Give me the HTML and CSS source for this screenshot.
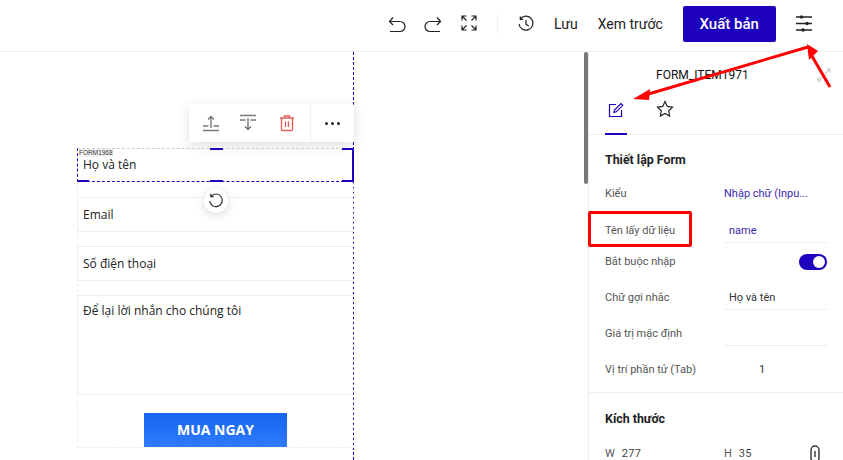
FILE: index.html
```html
<!DOCTYPE html>
<html lang="en">
<head>
  <meta charset="UTF-8">
  <title>Form editor</title>
  <link rel="stylesheet" href="styles.css">
</head>
<body>
  <header class="topbar">
    <button class="tool tool-undo" aria-label="Undo">
      <svg width="20" height="20" viewBox="0 0 20 20"><path d="M6 2.500 2.500 6.500 6 10M2.500 6.500H13a5 5 0 0 1 0 10H3"/></svg>
    </button>
    <button class="tool tool-redo" aria-label="Redo">
      <svg width="20" height="20" viewBox="0 0 20 20"><path d="M14 2.500l3.500 4L14 10M17.500 6.500H7a5 5 0 0 0 0 10h10"/></svg>
    </button>
    <button class="tool tool-full" aria-label="Fullscreen">
      <svg width="18" height="18" viewBox="0 0 18 18"><path d="M2 6.500V2h4.500M2 2l4.500 4.500M11.500 2H16v4.500M16 2l-4.500 4.500M2 11.500V16h4.500M2 16l4.500-4.500M16 11.500V16h-4.500M16 16l-4.500-4.500"/></svg>
    </button>
    <span class="divider"></span>
    <button class="tool tool-history" aria-label="History">
      <svg width="18" height="18" viewBox="0 0 18 18"><path d="M3.600 3.600A7 7 0 1 1 2 9M3.300 1.500v2.800h2.800M9 5v4.300l2.800 1.700"/></svg>
    </button>
    <span class="top-link link-save">Lưu</span>
    <span class="top-link link-preview">Xem trước</span>
    <button class="publish">Xuất bản</button>
    <button class="tool tool-sliders" aria-label="Settings">
      <svg width="18" height="18" viewBox="0 0 18 18"><path class="thick" d="M0 3h16M0 9.500h16M0 16h16"/><circle cx="5.500" cy="3" r="1.700"/><circle cx="11" cy="9.500" r="1.700"/><circle cx="7" cy="16" r="1.700"/></svg>
    </button>
  </header>

  <main class="workspace">
    <section class="canvas">
      <div class="guide guide-right"></div>

      <div class="float-bar">
        <button class="float-btn" aria-label="Move up">
          <svg width="18" height="18" viewBox="0 0 18 18"><path d="M1 12h5.500M11.500 12H17M1 16.500h16M9 14V3M6 5.500 9 2.500l3 3"/></svg>
        </button>
        <button class="float-btn" aria-label="Move down">
          <svg width="18" height="18" viewBox="0 0 18 18"><path d="M1 6h5.500M11.500 6H17M1 1.500h16M9 4v11M6 12.500l3 3 3-3"/></svg>
        </button>
        <button class="float-btn trash" aria-label="Delete">
          <svg width="18" height="18" viewBox="0 0 18 18"><path d="M2 4h14M6.500 4V2h5v2M3.500 4v11.500a1 1 0 0 0 1 1h9a1 1 0 0 0 1-1V4M7.500 7.500v5.500M10.500 7.500v5.500"/></svg>
        </button>
        <button class="float-btn more" aria-label="More">
          <span class="dot"></span><span class="dot"></span><span class="dot"></span>
        </button>
      </div>

      <form class="form-block">
        <div class="field field-active">
          <span class="form-tag">FORM1968</span>
          <span>Họ và tên</span>
          <i class="handle handle-top"></i>
          <i class="handle handle-tr"></i>
          <i class="handle handle-bl"></i>
          <i class="handle handle-bc"></i>
          <i class="handle handle-br"></i>
        </div>
        <div class="field field-email">Email</div>
        <div class="field field-phone">Số điện thoại</div>
        <div class="field field-message">Để lại lời nhắn cho chúng tôi</div>
        <div class="submit-row"><span class="submit">MUA NGAY</span></div>
      </form>

      <button class="rotate" aria-label="Rotate">
        <svg width="16" height="16" viewBox="0 0 16 16"><path d="M3 3.400A6.300 6.300 0 1 1 1.700 8M2.800 .8v2.900h2.900"/></svg>
      </button>
    </section>

    <div class="scrollbar"><div class="scroll-thumb"></div></div>

    <aside class="panel">
      <div class="panel-head">
        <span class="panel-title">FORM_ITEM1971</span>
        <svg class="panel-expand" width="14" height="14" viewBox="0 0 14 14"><path d="M8 6l5-5M9.500 1H13v3.500M6 8l-5 5M4.500 13H1V9.500"/></svg>
      </div>
      <div class="tabs">
        <div class="tab tab-active">
          <svg width="16" height="16" viewBox="0 0 16 16"><path d="M8 2.500H1.500v12h12V8M6 10.500l.5-2.500L13 1.500l1.800 1.800L8.300 9.800z"/></svg>
        </div>
        <div class="tab">
          <svg width="18" height="18" viewBox="0 0 18 18"><path d="M9 1.500l2.300 4.900 5.200.7-3.800 3.700.9 5.300L9 13.500l-4.600 2.600.9-5.300-3.800-3.700 5.200-.7z"/></svg>
        </div>
      </div>

      <div class="group group-form">
        <h3 class="group-title">Thiết lập Form</h3>
        <div class="row row-type"><span class="row-label">Kiểu</span><span class="row-value value-link">Nhập chữ (Inpu...</span></div>
        <div class="row row-name"><span class="row-label">Tên lấy dữ liệu</span><span class="row-value value-box value-blue">name</span></div>
        <div class="row row-switch"><span class="row-label">Bắt buộc nhập</span><span class="switch"><span class="knob"></span></span></div>
        <div class="row"><span class="row-label">Chữ gợi nhắc</span><span class="row-value value-box">Họ và tên</span></div>
        <div class="row"><span class="row-label">Giá trị mặc định</span><span class="row-value value-box"></span></div>
        <div class="row"><span class="row-label">Vị trí phần tử (Tab)</span><span class="row-value value-num">1</span></div>
      </div>

      <div class="group group-size">
        <h3 class="group-title">Kích thước</h3>
        <div class="size-row">
          <span class="size-item size-w"><span class="row-label">W</span><span class="size-num">277</span></span>
          <span class="size-item size-h"><span class="row-label">H</span><span class="size-num">35</span></span>
          <svg class="link-icon" width="10" height="18" viewBox="0 0 10 18"><rect x="1" y="1" width="8" height="16" rx="4"/><path d="M5 6v6"/></svg>
        </div>
      </div>
    </aside>
  </main>

  <div class="callout"></div>
  <svg class="arrows" width="843" height="460" viewBox="0 0 843 460">
    <path d="M830 87 809 51" />
    <path d="M808 47 645 95" />
    <polygon points="807,44 818,51 809,60" />
    <polygon points="633,99 650,89 649,100" />
  </svg>
</body>
</html>
```

FILE: styles.css
```css
* {
  box-sizing: border-box;
}
html, body {
  height: 100%;
}
body {
  margin: 0;
  width: 843px;
  height: 460px;
  overflow: hidden;
  position: relative;
  background: #fff;
  color: #222;
  font-family: Roboto, Arial, sans-serif;
  font-size: 12px;
}
button {
  border: 0;
  padding: 0;
  background: none;
  font-family: inherit;
}
svg {
  display: block;
  fill: none;
  stroke: currentColor;
  stroke-width: 1.2;
}

.topbar {
  height: 52px;
  display: flex;
  align-items: center;
  padding-left: 387px;
  border-bottom: 1px solid #eee;
  color: #222;
}
.tool {
  display: flex;
  color: #222;
}
.tool-undo, .tool-redo {
  margin-top: -2px;
}
.tool-redo {
  margin-left: 16px;
}
.tool-full {
  margin-left: 17px;
  margin-top: -5px;
}
.divider {
  width: 1px;
  height: 18px;
  margin: -4px 19px 0;
  background: #eee;
}
.tool-history {
  margin-top: -3px;
}
.top-link {
  margin-top: -3px;
  font-size: 14px;
  color: #222;
}
.link-save {
  margin-left: 19px;
}
.link-preview {
  margin-left: 20px;
}
.publish {
  width: 93px;
  height: 36px;
  margin-left: 20px;
  margin-top: -4px;
  border-radius: 2px;
  background: #1c00bd;
  color: #fff;
  font-size: 15px;
  font-weight: 500;
}
.tool-sliders {
  margin-left: 20px;
  margin-top: -5px;
}
.tool-sliders .thick {
  stroke-width: 1.5;
}
.tool-sliders circle {
  fill: #222;
  stroke: none;
}

.workspace {
  height: 408px;
  display: flex;
}
.canvas {
  width: 584px;
  position: relative;
  overflow: hidden;
}
.guide-right {
  position: absolute;
  left: 353px;
  top: 0;
  bottom: 0;
  border-left: 1px dashed #1c00bd;
}

.float-bar {
  position: absolute;
  left: 189px;
  top: 52px;
  width: 165px;
  height: 38px;
  display: flex;
  background: #fff;
  border-radius: 2px;
  box-shadow: 0 3px 12px rgba(0, 0, 0, .14);
}
.float-btn {
  width: 37px;
  display: flex;
  align-items: center;
  justify-content: center;
  color: #777;
}
.float-btn svg {
  stroke-width: 1.4;
}
.float-btn:first-child {
  margin-left: 3px;
}
.trash {
  width: 41px;
  color: #e2605c;
}
.more {
  width: 44px;
  margin-left: 3px;
  gap: 3px;
  border-left: 1px solid #eee;
}
.dot {
  width: 3px;
  height: 3px;
  border-radius: 50%;
  background: #222;
}

.form-block {
  position: absolute;
  left: 77px;
  top: 96px;
  width: 277px;
  height: 300px;
  border: 1px dashed #eee;
  border-top: 0;
  font-family: "Open Sans", Arial, sans-serif;
  font-size: 12px;
  color: #222;
}
.field {
  height: 35px;
  padding: 8px 5px;
  border: 1px solid #eee;
  border-right: 0;
  margin-left: -1px;
  line-height: 18px;
}
.field-active {
  position: relative;
  height: 34px;
  padding-top: 7px;
  border: 1px dashed #1c00bd;
  border-top-color: #ccc;
  margin-right: -1px;
  border-right: 2px solid #1c00bd;
}
.form-tag {
  position: absolute;
  left: 1px;
  top: 0;
  font-family: "Liberation Sans", Arial, sans-serif;
  font-size: 6.500px;
  line-height: 8px;
  color: #333;
  background: #f4f4f4;
}
.handle {
  position: absolute;
  height: 2px;
  background: #1c00bd;
}
.handle-top {
  left: 132px;
  top: -1px;
  width: 13px;
}
.handle-tr {
  right: -2px;
  top: -1px;
  width: 12px;
}
.handle-bl {
  left: -1px;
  bottom: -1px;
  width: 12px;
}
.handle-bc {
  left: 132px;
  bottom: -1px;
  width: 13px;
}
.handle-br {
  right: -2px;
  bottom: -1px;
  width: 12px;
}
.field-email {
  margin-top: 15px;
}
.field-phone {
  margin-top: 14px;
}
.field-message {
  height: 100px;
  margin-top: 14px;
  padding-top: 6px;
}
.submit-row {
  padding: 18px 0 0 66px;
}
.submit {
  display: block;
  width: 143px;
  height: 34px;
  background: linear-gradient(#1565f0, #2f7bff);
  color: #fff;
  font-size: 14px;
  font-weight: 700;
  line-height: 34px;
  text-align: center;
}

.rotate {
  position: absolute;
  left: 204px;
  top: 137px;
  width: 24px;
  height: 24px;
  display: flex;
  align-items: center;
  justify-content: center;
  border-radius: 50%;
  background: #fff;
  color: #333;
  box-shadow: 0 2px 8px rgba(0, 0, 0, .16);
}

.scrollbar {
  width: 5px;
  border-right: 1px solid #eee;
}
.scroll-thumb {
  width: 4px;
  height: 132px;
  background: #777;
  border-radius: 2px;
}

.panel {
  flex: 1;
  padding-top: 14px;
}
.panel-head {
  position: relative;
  height: 18px;
  padding-left: 67px;
  line-height: 18px;
}
.panel-title {
  color: #111;
}
.panel-expand {
  position: absolute;
  left: 228px;
  top: 2px;
  color: #ccc;
}
.tabs {
  height: 35px;
  margin-top: 16px;
  display: flex;
  padding-left: 16px;
  gap: 26px;
  border-bottom: 1px solid #eee;
}
.tab {
  width: 22px;
  height: 35px;
  padding: 0 3px;
  color: #222;
}
.tab-active {
  padding-top: 2px;
  color: #1c00bd;
  border-bottom: 2px solid #1c00bd;
}
.group {
  padding: 0 16px;
}
.group-form {
  height: 258px;
  padding-top: 18px;
  border-bottom: 1px solid #eee;
}
.group-title {
  margin: 0 0 8px;
  font-size: 12.400px;
  font-weight: 700;
  line-height: 14px;
  color: #222;
}
.row {
  display: flex;
  align-items: flex-start;
  height: 36px;
  font-size: 11px;
  line-height: 14px;
  color: #555;
}
.row-type {
  height: 37px;
}
.row-name {
  height: 31px;
}
.row-label {
  width: 119px;
  flex: none;
  margin-top: 12px;
  color: #555;
  font-size: 11px;
  line-height: 14px;
}
.row-value {
  flex: 1;
  margin-top: 12px;
  color: #333;
}
.value-link {
  color: #3a28b0;
}
.value-box {
  height: 31px;
  margin-top: 0;
  padding: 12px 0 0 5px;
  border-bottom: 1px solid #eee;
}
.value-blue {
  color: #3a28b0;
}
.value-num {
  padding-left: 35px;
}
.row-switch {
  justify-content: space-between;
}
.switch {
  display: flex;
  justify-content: flex-end;
  align-items: center;
  width: 28px;
  height: 16px;
  margin-top: 11px;
  padding-right: 2px;
  border-radius: 8px;
  background: #1c00bd;
}
.knob {
  width: 12px;
  height: 12px;
  border-radius: 50%;
  background: #fff;
}
.group-size {
  padding-top: 19px;
}
.group-size .group-title {
  margin-bottom: 18px;
}
.size-row {
  display: flex;
  align-items: center;
  height: 20px;
}
.size-item {
  display: flex;
  gap: 7px;
}
.size-item .row-label {
  width: auto;
  margin-top: 0;
}
.size-w {
  width: 119px;
}
.size-h {
  width: 85px;
}
.size-num {
  color: #444;
  font-size: 11px;
  line-height: 14px;
  letter-spacing: .3px;
}
.link-icon {
  margin-left: 1px;
  color: #333;
  stroke-width: 1.4;
}

.callout {
  position: absolute;
  left: 588px;
  top: 211px;
  width: 104px;
  height: 36px;
  border: 3px solid #f00;
  border-radius: 2px;
}
.arrows {
  position: absolute;
  left: 0;
  top: 0;
  pointer-events: none;
}
.arrows path {
  stroke: #f00;
  stroke-width: 3;
}
.arrows polygon {
  fill: #f00;
  stroke: none;
}
```
